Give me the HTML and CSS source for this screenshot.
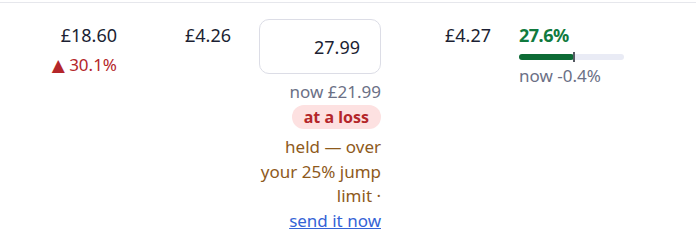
FILE: index.html
```html
<!DOCTYPE html>
<html lang="en">
<head>
<meta charset="utf-8">
<link rel="stylesheet" href="styles.css">
</head>
<body>
<div class="row">
  <div class="cell num">
    <div class="val">£18.60</div>
    <div class="up"><span class="tri">▲</span> 30.1%</div>
  </div>
  <div class="cell num">
    <div class="val">£4.26</div>
  </div>
  <div class="cell num">
    <input class="price" type="text" value="27.99">
    <div class="now">now £21.99</div>
    <div class="pillwrap"><span class="pill">at a loss</span></div>
    <div class="held">held — over your 25% jump limit · <a class="send" href="#">send it now</a></div>
  </div>
  <div class="cell num">
    <div class="val">£4.27</div>
  </div>
  <div class="cell margin">
    <div class="pct">27.6%</div>
    <div class="bar"><div class="fill" style="width:52%"></div><div class="mark" style="left:52%"></div></div>
    <div class="now">now -0.4%</div>
  </div>
</div>
</body>
</html>
```
FILE: styles.css
```css
html, body {
  margin: 0;
  padding: 0;
  background: #fff;
}
body {
  font-family: "Noto Sans", "Open Sans", sans-serif;
  color: #1c1f33;
  padding-top: 2px;
}
.row {
  display: grid;
  grid-template-columns: 131px 114px 150px 110px 1fr;
  border-top: 1px solid #e6e7ec;
}
.cell {
  padding: 17px 14px 0;
  font-size: 17px;
  line-height: 24px;
}
.num {
  text-align: right;
}
.val {
  font-size: 18px;
  line-height: 30px;
}
.up {
  color: #b4262a;
  font-size: 17px;
  line-height: 30px;
}
.tri {
  font-family: "DejaVu Sans", sans-serif;
  font-size: 17px;
}
.price {
  box-sizing: border-box;
  width: 122px;
  height: 55px;
  border: 1px solid #dcdde6;
  border-radius: 10px;
  padding: 0 20px 0 10px;
  text-align: right;
  font: inherit;
  font-size: 18px;
  color: #1c1f33;
  display: block;
  margin: -1px 0 0 auto;
}
.now {
  color: #6b7086;
  font-size: 17px;
  line-height: 24px;
  margin-top: 6px;
}
.pillwrap {
  margin-top: 1px;
  line-height: 24px;
}
.pill {
  display: inline-block;
  background: #fde1e1;
  color: #b4262a;
  font-weight: 700;
  font-size: 16px;
  line-height: 24px;
  padding: 0 12px;
  border-radius: 12px;
}
.held {
  color: #8e5a1c;
  font-size: 17px;
  line-height: 24.5px;
  margin-top: 6px;
}
.send {
  color: #3563d6;
  text-decoration: underline;
  white-space: nowrap;
}
.pct {
  color: #107a3e;
  font-weight: 700;
  font-size: 18px;
  letter-spacing: -0.5px;
  line-height: 30px;
}
.bar {
  position: relative;
  width: 105px;
  height: 6px;
  background: #e9ebf5;
  border-radius: 3px;
  margin-top: 4px;
}
.fill {
  height: 6px;
  background: #0d6b35;
  border-radius: 3px;
}
.mark {
  position: absolute;
  top: -2px;
  width: 2px;
  margin-left: -1px;
  height: 10px;
  background: #555a63;
}
.margin .now {
  margin-top: 4px;
}
```
